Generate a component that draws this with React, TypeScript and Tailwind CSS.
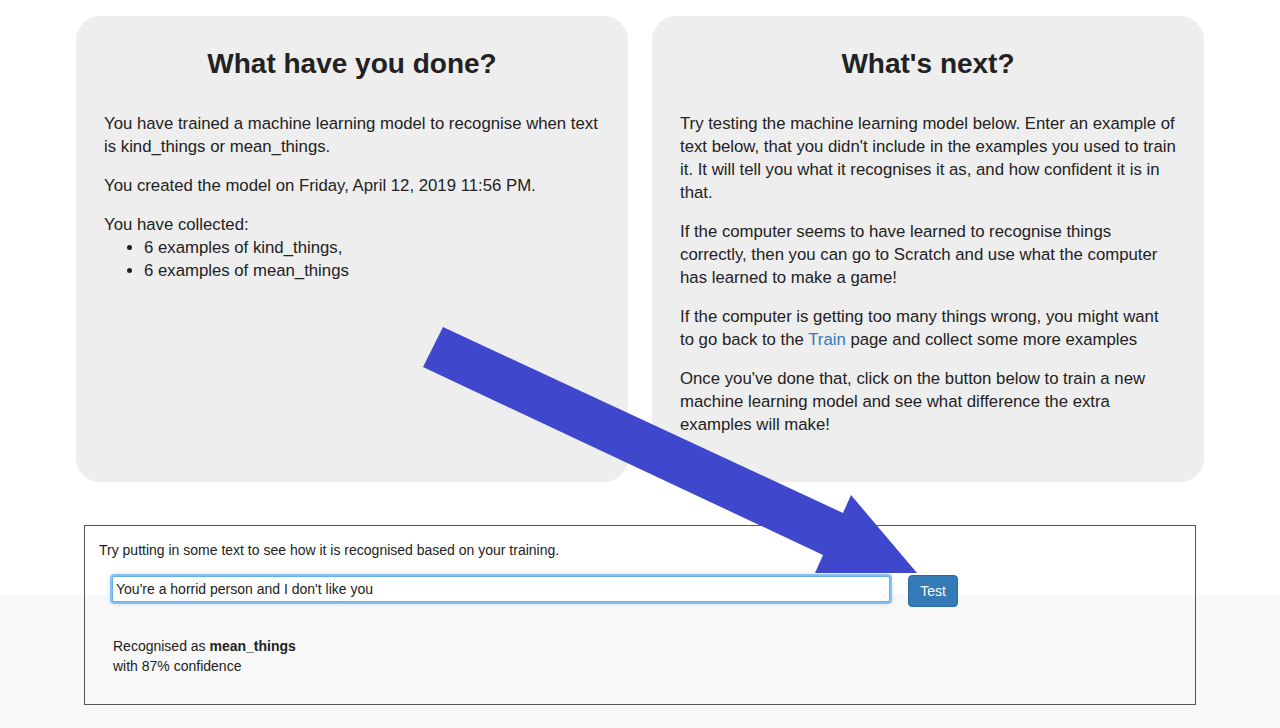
import { useState } from "react"

function Arrow() {
  // hand-drawn paint arrow laid over the page
  return (
    <svg
      className="pointer-events-none absolute left-0 top-0"
      width="1280"
      height="728"
      viewBox="0 0 1280 728"
    >
      <polygon
        points="443,327 843,513 851,495 917,573 815,573 823,555 423,367"
        fill="#3f48cc"
      />
    </svg>
  )
}

export default function App() {
  const [text, setText] = useState("You're a horrid person and I don't like you")

  return (
    <div
      className="relative min-h-[728px] bg-[linear-gradient(to_bottom,#ffffff_595px,#f8f8f8_595px)] text-[#222222]"
      style={{ fontFamily: '"Liberation Sans", Arial, sans-serif' }}
    >
      <div className="mx-auto grid w-[1128px] grid-cols-2 gap-6 pt-4">
        <div className="h-[466px] rounded-[24px] bg-[#eeeeee] px-7 pt-[32px]">
          <h2 className="text-center text-[28px] font-bold leading-[31px]">What have you done?</h2>
          <div className="mt-[33px] text-[16.75px] leading-[23px]">
            <p>You have trained a machine learning model to recognise when text is kind_things or mean_things.</p>
            <p className="mt-4">You created the model on Friday, April 12, 2019 11:56 PM.</p>
            <p className="mt-4">You have collected:</p>
            <ul className="list-disc pl-10">
              <li>6 examples of kind_things,</li>
              <li>6 examples of mean_things</li>
            </ul>
          </div>
        </div>

        <div className="h-[466px] rounded-[24px] bg-[#eeeeee] px-7 pt-[32px]">
          <h2 className="text-center text-[28px] font-bold leading-[31px]">What's next?</h2>
          <div className="mt-[33px] text-[16.75px] leading-[23px]">
            <p>
              Try testing the machine learning model below. Enter an example of text below, that you didn't include
              in the examples you used to train it. It will tell you what it recognises it as, and how confident it
              is in that.
            </p>
            <p className="mt-4">
              If the computer seems to have learned to recognise things correctly, then you can go to Scratch and use
              what the computer has learned to make a game!
            </p>
            <p className="mt-4">
              If the computer is getting too many things wrong, you might want to go back to the{" "}
              <a className="text-[#337ab7]">Train</a> page and collect some more examples
            </p>
            <p className="mt-4">
              Once you've done that, click on the button below to train a new machine learning model and see what
              difference the extra examples will make!
            </p>
          </div>
        </div>
      </div>

      <div className="mx-auto mt-[43px] h-[180px] w-[1112px] border border-[#555555] px-[14px] pt-[15px] text-[14px]">
        <p className="leading-[19px]">Try putting in some text to see how it is recognised based on your training.</p>
        <div className="mt-[15px] flex items-start pl-[13px]">
          <input
            value={text}
            onChange={(e) => setText(e.target.value)}
            className="mt-[1px] h-[26px] w-[778px] rounded-[2px] border border-[#66afe9] bg-white px-[3px] text-[14px] text-[#222222] shadow-[0_0_0_2px_rgba(102,175,233,0.7),0_0_6px_rgba(102,175,233,0.7)] outline-none"
          />
          <button className="ml-[18px] h-[32px] w-[50px] rounded-[4px] border border-[#2e6da4] bg-[#337ab7] text-[14px] text-white">
            Test
          </button>
        </div>
        <div className="mt-[29px] pl-[14px] leading-[20px]">
          <div>
            Recognised as <b>mean_things</b>
          </div>
          <div>with 87% confidence</div>
        </div>
      </div>

      <Arrow />
    </div>
  )
}
